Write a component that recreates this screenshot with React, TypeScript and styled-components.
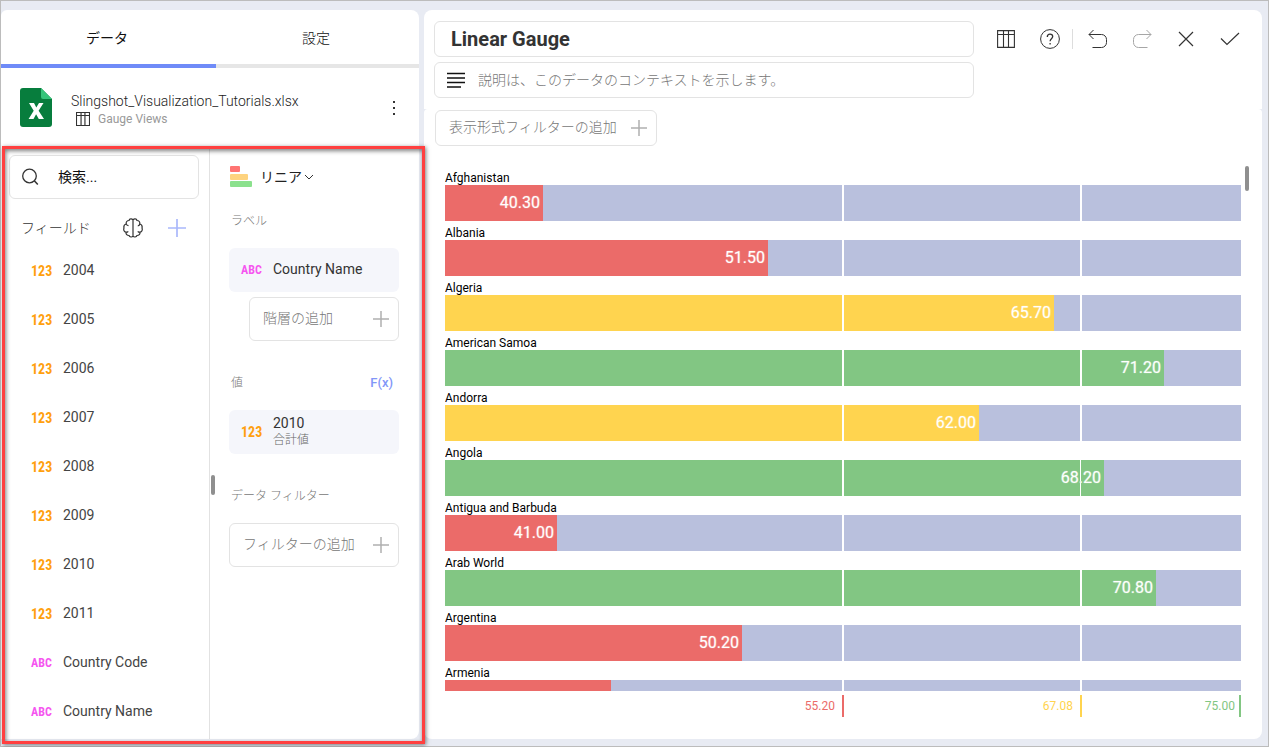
import React from "react";
import styled, { createGlobalStyle, css } from "styled-components";

const FONT = `Roboto, "Noto Sans CJK JP", sans-serif`;

const GlobalStyle = createGlobalStyle`
  *, *::before, *::after { box-sizing: border-box; }
  body { margin: 0; font-family: ${FONT}; font-size: 14px; color: #333; }
  button, input, select { font-family: inherit; font-size: inherit; color: inherit; }
  h2, h3, p, ul { margin: 0; padding: 0; }
`;

const Shell = styled.div`
  display: grid;
  grid-template-columns: 418px minmax(0, 1fr);
  gap: 5px;
  height: 100vh;
  min-height: 640px;
  padding: 9px 6px 7px 0;
  border: 1px solid #bcbcbc;
  background: #e8ebf3;
`;

const Sidebar = styled.aside`
  display: flex;
  flex-direction: column;
  min-height: 0;
  background: #fff;
  border-radius: 6px 8px 8px 0;
`;

const Tabs = styled.div`
  display: flex;
  height: 58px;
`;

const Tab = styled.button<{ $active?: boolean }>`
  flex: ${(p) => (p.$active ? "215 1 0" : "203 1 0")};
  padding: 0 3px 0 0;
  border: 0;
  border-bottom: 4px solid ${(p) => (p.$active ? "#6f8bf8" : "#e6e6e6")};
  background: none;
  color: #111;
  font-weight: ${(p) => (p.$active ? 400 : 300)};
`;

const Source = styled.div`
  display: flex;
  align-items: center;
  height: 79px;
  padding: 0 20px 0 19px;
`;

const SourceText = styled.div`
  flex: 1;
  margin: 5px 0 0 19px;
  line-height: 18px;
  font-weight: 300;
  color: #222;
`;

const SourceSheet = styled.div`
  display: flex;
  align-items: center;
  gap: 8px;
  padding-left: 5px;
  font-size: 12px;
  font-weight: 400;
  color: #999;
`;

const IconButton = styled.button<{ $w?: number }>`
  display: flex;
  align-items: center;
  justify-content: center;
  flex: none;
  width: ${(p) => p.$w ?? 44}px;
  height: 36px;
  padding: 0;
  border: 0;
  background: none;
  color: #333;
`;

const Workspace = styled.div`
  position: relative;
  display: flex;
  flex: 1;
  min-height: 0;
  margin-top: 2px;
`;

const Highlight = styled.div`
  position: absolute;
  inset: -3px -6px -5px 1px;
  border: 3px solid #ff4040;
  box-shadow: 1px 1px 4px rgba(0, 0, 0, 0.5), inset 1px 2px 4px rgba(0, 0, 0, 0.5);
  pointer-events: none;
`;

const FieldsPane = styled.section`
  width: 209px;
  padding: 6px 10px 0 8px;
  border-right: 1px solid #e2e2e2;
  overflow: hidden;
`;

const outlined = css`
  border: 1px solid #e3e3e3;
  border-radius: 6px;
  background: #fff;
`;

const SearchBox = styled.label`
  ${outlined}
  display: flex;
  align-items: center;
  gap: 18px;
  height: 44px;
  padding-left: 12px;
`;

const PlainInput = styled.input`
  flex: 1;
  min-width: 0;
  padding: 0;
  border: 0;
  outline: 0;
  background: none;
  &::placeholder { color: #111; opacity: 1; }
`;

const FieldsHeader = styled.div`
  display: flex;
  align-items: center;
  height: 47px;
  padding: 11px 0 0 12px;
`;

const FieldsTitle = styled.h2`
  flex: 1;
  padding-bottom: 2px;
  font-size: 14px;
  font-weight: 300;
`;

const FieldList = styled.ul`
  list-style: none;
`;

const FieldRow = styled.li`
  display: flex;
  align-items: center;
  gap: 12px;
  height: 49px;
  padding-left: 22px;
  color: #444;
`;

const FieldName = styled.span`
  padding-bottom: 2px;
`;

const TypeTag = styled.span<{ $kind: Kind }>`
  width: 20px;
  font-family: "Roboto Condensed", "Liberation Sans Narrow", Roboto, sans-serif;
  font-size: ${(p) => (p.$kind === "123" ? 14 : 12)}px;
  font-weight: 700;
  color: ${(p) => (p.$kind === "123" ? "#ff9f0f" : "#f556f0")};
`;

const Grip = styled.div`
  width: 4px;
  height: 20px;
  margin: 326px 0 0 1px;
  border-radius: 2px;
  background: #8f8f8f;
`;

const ConfigPane = styled.section`
  flex: 1;
  padding: 17px 20px 0 14px;
`;

const ChartType = styled.div`
  display: flex;
  align-items: center;
  gap: 8px;
  height: 22px;
  padding-left: 1px;
  margin-bottom: -9px;
`;

const SelectWrap = styled.div`
  position: relative;
  display: flex;
  align-items: center;
  svg { position: absolute; right: 0; pointer-events: none; }
`;

const Select = styled.select`
  appearance: none;
  width: 54px;
  padding: 0;
  border: 0;
  background: none;
  color: #222;
`;

const SectionHead = styled.div`
  display: flex;
  align-items: center;
  justify-content: space-between;
  padding: 33px 6px 18px 2px;
  line-height: 18px;
`;

const SectionTitle = styled.h3`
  padding-top: 1px;
  font-size: 12px;
  font-weight: 300;
  line-height: 17px;
  color: #777;
`;

const FormulaButton = styled.button`
  padding: 0;
  border: 0;
  background: none;
  font-size: 13px;
  font-weight: 500;
  line-height: 18px;
  color: #8296f8;
`;

const FieldCard = styled.div`
  display: flex;
  align-items: center;
  gap: 12px;
  height: 44px;
  padding-left: 12px;
  border-radius: 6px;
  background: #f5f6fb;
`;

const CardText = styled.div`
  line-height: 17px;
  padding-bottom: 1px;
  small { display: block; font-size: 12px; font-weight: 300; color: #666; }
`;

const AddButton = styled.button<{ $nested?: boolean; $compact?: boolean }>`
  ${outlined}
  display: flex;
  align-items: center;
  justify-content: space-between;
  width: ${(p) => (p.$compact ? "222px" : p.$nested ? "calc(100% - 20px)" : "100%")};
  height: ${(p) => (p.$compact ? 36 : 44)}px;
  margin: ${(p) => (p.$nested ? "5px 0 0 20px" : "0")};
  padding: 0 9px 0 13px;
  font-weight: 300;
  color: #777;
  span { padding-bottom: 4px; }
`;

const Main = styled.main`
  display: flex;
  flex-direction: column;
  min-width: 0;
  min-height: 0;
`;

const Header = styled.header`
  display: flex;
  gap: 10px;
  padding: 11px 10px;
  border-radius: 8px 8px 0 0;
  background: #fff;
`;

const Titles = styled.div`
  display: flex;
  flex: 1;
  flex-direction: column;
  gap: 5px;
  min-width: 0;
`;

const TitleInput = styled.input`
  ${outlined}
  height: 36px;
  padding: 0 16px;
  outline: 0;
  font-size: 20px;
  font-weight: 700;
`;

const Description = styled.label`
  ${outlined}
  display: flex;
  align-items: center;
  gap: 13px;
  height: 36px;
  padding: 0 12px;
`;

const DescriptionInput = styled(PlainInput)`
  font-weight: 300;
  &::placeholder { color: #777; }
`;

const Toolbar = styled.div`
  display: flex;
  height: 36px;
`;

const Divider = styled.span`
  width: 4px;
  height: 20px;
  margin-top: 8px;
  border-left: 1px solid #ddd;
`;

const ChartCard = styled.section`
  display: flex;
  flex: 1;
  flex-direction: column;
  min-height: 0;
  padding: 1px 13px 22px 11px;
  border-radius: 4px 4px 8px 8px;
  background: #fff;
`;

const Plot = styled.div`
  display: flex;
  flex: 1;
  gap: 4px;
  min-height: 0;
  margin: 20px 0 4px 10px;
`;

const Gauges = styled.div`
  flex: 1;
  min-width: 0;
  overflow: hidden;
`;

const GaugeLabel = styled.div`
  padding-top: 5px;
  font-size: 12px;
  line-height: 14px;
  color: #000;
`;

const Track = styled.div`
  position: relative;
  height: 36px;
  background: #b9c0dd;
`;

const Bar = styled.div<{ $color: string }>`
  height: 36px;
  padding-right: 3px;
  background: ${(p) => p.$color};
  font-size: 16px;
  line-height: 36px;
  text-align: right;
  color: #fff;
`;

const BarValue = styled.span<{ $color: string }>`
  position: relative;
  z-index: 1;
  text-shadow: 0 0 1px ${(p) => p.$color}, 0 0 1px #fff;
`;

const Split = styled.span<{ $crossesText?: boolean }>`
  position: absolute;
  top: 0;
  bottom: 0;
  width: ${(p) => (p.$crossesText ? 1 : 2)}px;
  background: #fff;
`;

const ScrollThumb = styled.div`
  width: 4px;
  height: 25px;
  border-radius: 2px;
  background: #8f8f8f;
`;

const Axis = styled.div`
  position: relative;
  height: 22px;
  margin: 0 8px 0 10px;
`;

const Tick = styled.span<{ $color: string; $last?: boolean }>`
  position: absolute;
  height: 22px;
  padding-right: ${(p) => (p.$last ? 4 : 7)}px;
  border-right: 2px solid ${(p) => p.$color};
  font-size: 12px;
  line-height: 22px;
  color: ${(p) => p.$color};
`;

type Kind = "123" | "ABC";

const MIN = 35.4;
const MAX = 75;
const RED = "#eb6b69";
const YELLOW = "#ffd44f";
const GREEN = "#82c683";

const percent = (v: number) => ((v - MIN) / (MAX - MIN)) * 100;
const colorOf = (v: number) => (v < 55.2 ? RED : v < 67.08 ? YELLOW : GREEN);

const gauges: [string, number][] = [
  ["Afghanistan", 40.3],
  ["Albania", 51.5],
  ["Algeria", 65.7],
  ["American Samoa", 71.2],
  ["Andorra", 62],
  ["Angola", 68.2],
  ["Antigua and Barbuda", 41],
  ["Arab World", 70.8],
  ["Argentina", 50.2],
  ["Armenia", 43.7],
];

const fields: [Kind, string][] = [
  ["123", "2004"],
  ["123", "2005"],
  ["123", "2006"],
  ["123", "2007"],
  ["123", "2008"],
  ["123", "2009"],
  ["123", "2010"],
  ["123", "2011"],
  ["ABC", "Country Code"],
  ["ABC", "Country Name"],
];

const ticks = [
  { value: 55.2, color: RED },
  { value: 67.08, color: YELLOW },
  { value: 75, color: GREEN },
];

const Svg = ({ w, h = w, children }: { w: number; h?: number; children: React.ReactNode }) => (
  <svg width={w} height={h} viewBox={`0 0 ${w} ${h}`} fill="none" stroke="currentColor" aria-hidden="true">
    {children}
  </svg>
);

const Plus = ({ color, size = 16 }: { color: string; size?: number }) => (
  <svg width={size} height={size} viewBox="0 0 16 16" stroke={color} strokeWidth="1.5" aria-hidden="true">
    <path d="M8 0v16M0 8h16" />
  </svg>
);

const TableIcon = ({ size }: { size: number }) => (
  <svg width={size} height={size} viewBox="0 0 18 18" fill="none" stroke="#333" strokeWidth={size < 18 ? 1.5 : 1.1} aria-hidden="true">
    <path d="M.6.6h16.800v16.800H.6zM.6 4.500h16.800M6.500.5v17M11.500.5v17" />
  </svg>
);

const ExcelIcon = () => (
  <svg width="32" height="39" viewBox="0 0 32 39" aria-hidden="true">
    <path d="M3 0h18l11 11v25a3 3 0 0 1-3 3H3a3 3 0 0 1-3-3V3a3 3 0 0 1 3-3z" fill="#077d3d" />
    <path d="M21 0l11 11h-9a2 2 0 0 1-2-2z" fill="#35c57a" />
    <path d="M9 15h5l2.300 4.500L19 15h4.500l-4.900 7.800L24 31h-5.200l-2.700-4.800L13.500 31H8.600l5.100-8.200z" fill="#fff" />
  </svg>
);

const BrainIcon = () => (
  <Svg w={20}>
    <path
      strokeWidth="1.200"
      d="M10 1.500v17M10 2C9 .5 6.500.5 6 2.500 4 2.500 2.800 4 3.300 6 1.500 6.500.500 8 1 10c-.8 2 .2 3.700 2 4.200-.2 2 1 3.300 3 3.300.7 1.800 3 2 4 .5M10 2c1-1.500 3.500-1.500 4 .5 2 0 3.200 1.500 2.700 3.500 1.800.5 2.800 2 2.300 4 .8 2-.2 3.700-2 4.200.2 2-1 3.300-3 3.300-.7 1.800-3 2-4 .5M3.300 6c.2 1 1 1.600 2.200 1.600M16.700 6c0 1-.6 1.700-1.900 1.800M3 14.200c.8.1 1.700-.2 2.200-.9M17 14.200c-.8.1-1.700-.2-2.200-.9"
    />
  </Svg>
);

export default function App() {
  return (
    <>
      <GlobalStyle />
      <Shell>
        <Sidebar>
          <Tabs role="tablist">
            <Tab role="tab" aria-selected="true" $active>データ</Tab>
            <Tab role="tab" aria-selected="false">設定</Tab>
          </Tabs>
          <Source>
            <ExcelIcon />
            <SourceText>
              <p>Slingshot_Visualization_Tutorials.xlsx</p>
              <SourceSheet>
                <TableIcon size={14} />
                Gauge Views
              </SourceSheet>
            </SourceText>
            <IconButton $w={10} aria-label="その他">
              <svg width="4" height="16" fill="#333" aria-hidden="true">
                <path d="M1 1h2v2H1zM1 7h2v2H1zM1 13h2v2H1z" />
              </svg>
            </IconButton>
          </Source>
          <Workspace>
            <FieldsPane>
              <SearchBox>
                <Svg w={18}>
                  <circle cx="7.500" cy="8" r="6.800" strokeWidth="1.300" />
                  <path d="M12.300 12.800l3.500 3.700" strokeWidth="1.500" />
                </Svg>
                <PlainInput type="search" placeholder="検索..." aria-label="検索" />
              </SearchBox>
              <FieldsHeader>
                <FieldsTitle>フィールド</FieldsTitle>
                <IconButton aria-label="AI"><BrainIcon /></IconButton>
                <IconButton aria-label="フィールドの追加"><Plus color="#a9b8fb" size={18} /></IconButton>
              </FieldsHeader>
              <FieldList>
                {fields.map(([kind, name]) => (
                  <FieldRow key={name}>
                    <TypeTag $kind={kind}>{kind}</TypeTag>
                    <FieldName>{name}</FieldName>
                  </FieldRow>
                ))}
              </FieldList>
            </FieldsPane>
            <Grip />
            <ConfigPane>
              <ChartType>
                <svg width="22" height="22" aria-hidden="true">
                  <rect y="0" width="10" height="6" rx="1" fill="#ff7473" />
                  <rect y="8" width="18" height="6" rx="1" fill="#fed37f" />
                  <rect y="15" width="22" height="6" rx="1" fill="#8be18d" />
                </svg>
                <SelectWrap>
                  <Select aria-label="表示形式"><option>リニア</option></Select>
                  <Svg w={10} h={6}><path d="M1 1l4 4 4-4" /></Svg>
                </SelectWrap>
              </ChartType>
              <SectionHead><SectionTitle>ラベル</SectionTitle></SectionHead>
              <FieldCard>
                <TypeTag $kind="ABC">ABC</TypeTag>
                <CardText>Country Name</CardText>
              </FieldCard>
              <AddButton $nested><span>階層の追加</span><Plus color="#b0b0b0" /></AddButton>
              <SectionHead>
                <SectionTitle>値</SectionTitle>
                <FormulaButton>F(x)</FormulaButton>
              </SectionHead>
              <FieldCard>
                <TypeTag $kind="123">123</TypeTag>
                <CardText>2010<small>合計値</small></CardText>
              </FieldCard>
              <SectionHead><SectionTitle>データ フィルター</SectionTitle></SectionHead>
              <AddButton><span>フィルターの追加</span><Plus color="#b0b0b0" /></AddButton>
            </ConfigPane>
            <Highlight />
          </Workspace>
        </Sidebar>
        <Main>
          <Header>
            <Titles>
              <TitleInput defaultValue="Linear Gauge" aria-label="タイトル" />
              <Description>
                <Svg w={18} h={16}><path d="M0 1.500h18M0 6h18M0 10.500h18M0 15h14" strokeWidth="1.300" stroke="#111" /></Svg>
                <DescriptionInput placeholder="説明は、このデータのコンテキストを示します。" aria-label="説明" />
              </Description>
            </Titles>
            <Toolbar>
              <IconButton aria-label="表"><TableIcon size={18} /></IconButton>
              <IconButton aria-label="ヘルプ">
                <Svg w={20}>
                  <circle cx="10" cy="10" r="9.400" />
                  <path d="M7.300 8c0-1.800 1.100-2.900 2.700-2.900s2.700 1 2.700 2.500c0 2-2.600 2.300-2.600 4.600M10.100 14v1.400" strokeWidth="1.300" />
                </Svg>
              </IconButton>
              <Divider />
              <IconButton aria-label="元に戻す">
                <Svg w={20}><path d="M5.500 1L1 5.500l4.500 4.500M1 5.500h12.500a5 5 0 0 1 5 5V13.500a5 5 0 0 1-5 5H4.500" /></Svg>
              </IconButton>
              <IconButton aria-label="やり直し">
                <svg width="20" height="20" fill="none" stroke="#a6a6a6" aria-hidden="true">
                  <path d="M14.500 1L19 5.500 14.500 10M19 5.500H6.500a5 5 0 0 0-5 5v3a5 5 0 0 0 5 5h9" />
                </svg>
              </IconButton>
              <IconButton aria-label="閉じる"><Svg w={16}><path d="M1 1l14 14M15 1L1 15" strokeWidth="1.200" /></Svg></IconButton>
              <IconButton aria-label="完了"><Svg w={20} h={14}><path d="M1 6.500l6 6L19 1" strokeWidth="1.200" /></Svg></IconButton>
            </Toolbar>
          </Header>
          <ChartCard>
            <AddButton $compact><span>表示形式フィルターの追加</span><Plus color="#b0b0b0" /></AddButton>
            <Plot>
              <Gauges>
                {gauges.map(([name, value]) => (
                  <div key={name}>
                    <GaugeLabel>{name}</GaugeLabel>
                    <Track>
                      <Bar $color={colorOf(value)} style={{ width: `round(down, ${percent(value)}%, 1px)` }}>
                        {name !== "Armenia" && <BarValue $color={colorOf(value)}>{value.toFixed(2)}</BarValue>}
                      </Bar>
                      {ticks.slice(0, 2).map((t) => (
                        <Split
                          key={t.value}
                          $crossesText={value > t.value && value - t.value < 2}
                          style={{ left: `calc(round(down, ${percent(t.value)}%, 1px) - 1px)` }}
                        />
                      ))}
                    </Track>
                  </div>
                ))}
              </Gauges>
              <ScrollThumb />
            </Plot>
            <Axis>
              {ticks.map((t) => (
                <Tick
                  key={t.value}
                  $color={t.color}
                  $last={t.value === MAX}
                  style={{ right: t.value === MAX ? 0 : `calc(100% - round(down, ${percent(t.value)}%, 1px) - 1px)` }}
                >
                  {t.value.toFixed(2)}
                </Tick>
              ))}
            </Axis>
          </ChartCard>
        </Main>
      </Shell>
    </>
  );
}
